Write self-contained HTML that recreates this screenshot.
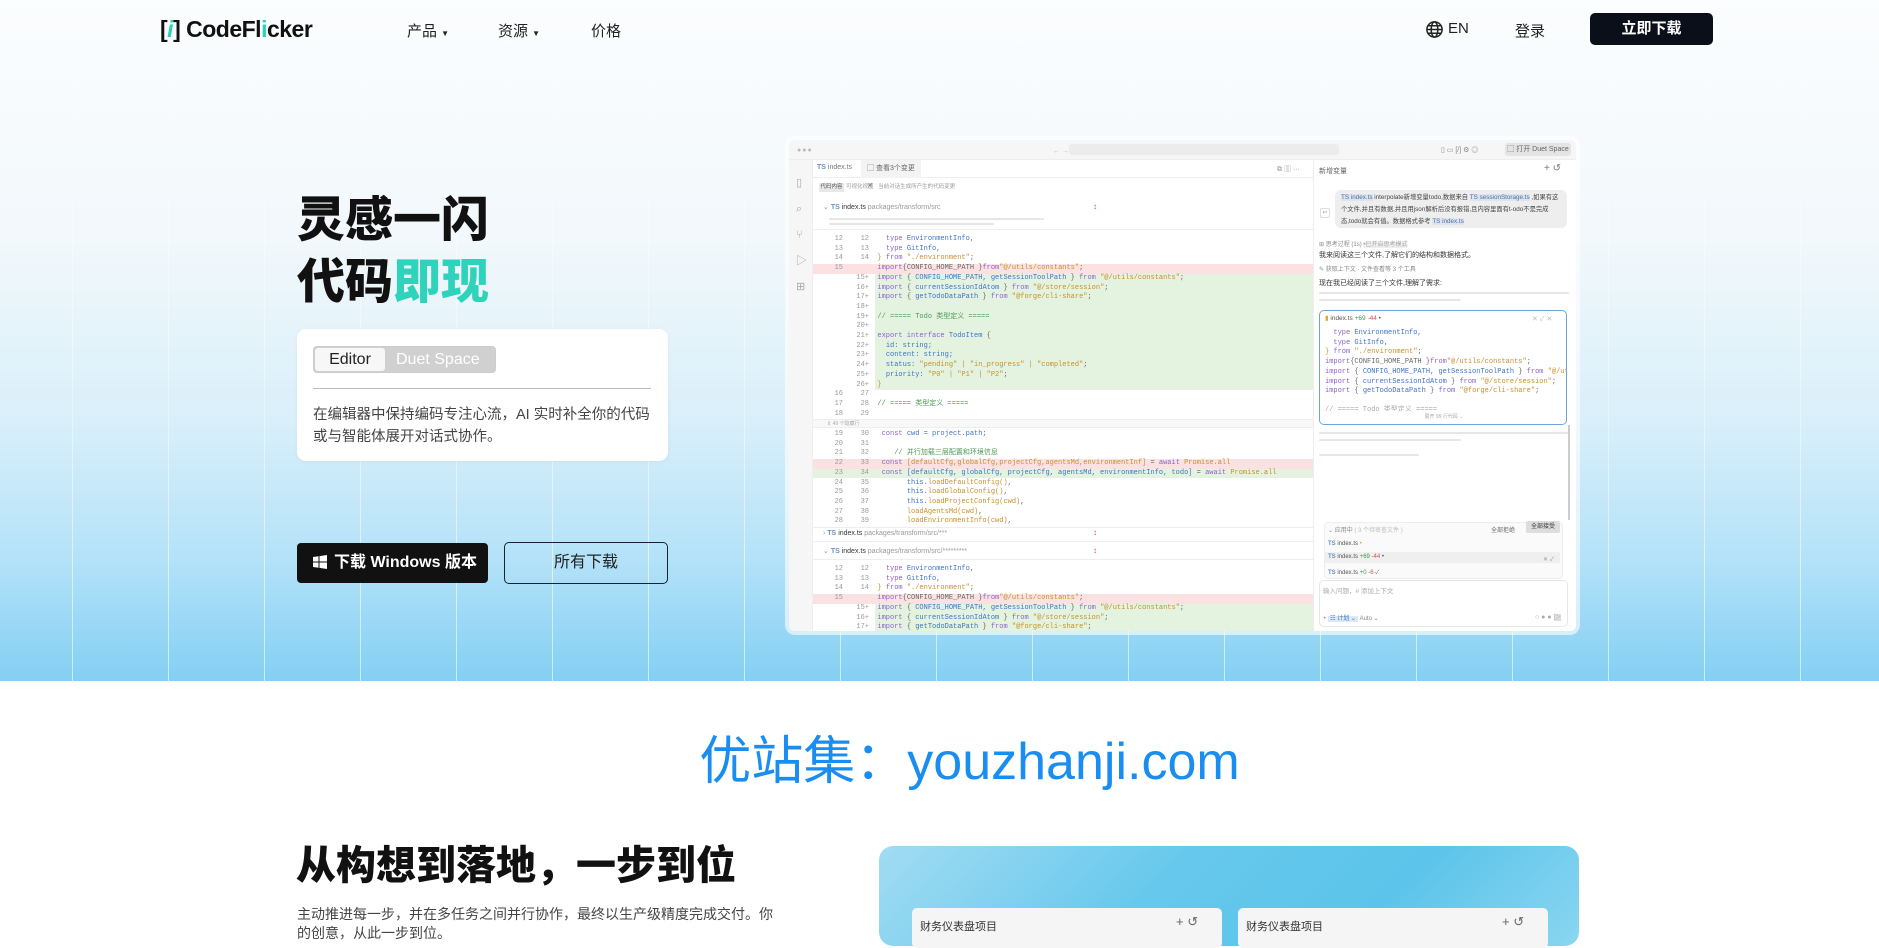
<!DOCTYPE html>
<html><head><meta charset="utf-8">
<style>
*{margin:0;padding:0;box-sizing:border-box}
body{width:1879px;height:933px;overflow:hidden;position:relative;background:#fff;font-family:"Liberation Sans","Noto Sans CJK SC",sans-serif;color:#111}
.abs{position:absolute}
.hero{position:absolute;left:0;top:0;width:1879px;height:681px;background:linear-gradient(180deg,#fbfdfe 0%,#f2f8fb 35%,#d9effa 62%,#b4e2f8 82%,#84cff3 100%);overflow:hidden}
.vl{position:absolute;top:0;width:1px;height:681px;background:linear-gradient(180deg,rgba(255,255,255,0) 0%,rgba(255,255,255,0.35) 40%,rgba(255,255,255,0.6) 100%)}
.nav{font-size:15px;color:#222}
.ed{position:absolute;left:789px;top:140px;width:787px;height:491px;background:#fff;border-radius:6px;box-shadow:0 0 0 4px rgba(255,255,255,0.6);overflow:hidden;font-size:7px;color:#666}
.ln{position:absolute;height:9.7px;line-height:9.7px;white-space:nowrap;font-family:"Liberation Mono","Noto Sans CJK SC",monospace;font-size:7px}
.red{background:#fbe1e1}
.grn{background:#e3f3df}
.k{color:#8a63c9}.s{color:#c7902b}.b{color:#3e73c8}.c{color:#4f9a55}
.bar{position:absolute;height:3px;background:#e6e6e6;border-radius:2px}
</style></head><body>
<div class="hero">
<div class="vl" style="left:72px"></div><div class="vl" style="left:168px"></div><div class="vl" style="left:264px"></div><div class="vl" style="left:360px"></div><div class="vl" style="left:456px"></div><div class="vl" style="left:552px"></div><div class="vl" style="left:648px"></div><div class="vl" style="left:744px"></div><div class="vl" style="left:840px"></div><div class="vl" style="left:936px"></div><div class="vl" style="left:1032px"></div><div class="vl" style="left:1128px"></div><div class="vl" style="left:1224px"></div><div class="vl" style="left:1320px"></div><div class="vl" style="left:1416px"></div><div class="vl" style="left:1512px"></div><div class="vl" style="left:1608px"></div><div class="vl" style="left:1704px"></div><div class="vl" style="left:1800px"></div>
</div>

<!-- nav -->
<div class="abs" style="left:160px;top:16px;font-size:23px;font-weight:700;letter-spacing:-0.5px;color:#111;line-height:26px">[<span style="color:#2ad0b7;font-style:italic">i</span>] CodeFl<span style="color:#2ad0b7">i</span>cker</div>
<div class="abs nav" style="left:407px;top:20px">产品 <span style="font-size:8px">▼</span></div>
<div class="abs nav" style="left:498px;top:20px">资源 <span style="font-size:8px">▼</span></div>
<div class="abs nav" style="left:591px;top:20px">价格</div>
<svg class="abs" style="left:1425px;top:20px" width="19" height="19" viewBox="0 0 20 20" fill="none" stroke="#222" stroke-width="1.6"><circle cx="10" cy="10" r="8"/><ellipse cx="10" cy="10" rx="3.5" ry="8"/><path d="M2 10h16M3.5 6h13M3.5 14h13"/></svg>
<div class="abs nav" style="left:1448px;top:20px">EN</div>
<div class="abs nav" style="left:1515px;top:20px">登录</div>
<div class="abs" style="left:1590px;top:13px;width:123px;height:32px;background:#0b0f1a;border-radius:5px;color:#fff;font-size:15px;font-weight:700;text-align:center;line-height:32px">立即下载</div>

<!-- hero text -->
<div class="abs" style="left:297px;top:190px;font-size:48px;font-weight:900;line-height:62px;color:#111">灵感一闪<br>代码<span style="color:#2fd3bb">即现</span></div>
<div class="abs" style="left:297px;top:329px;width:371px;height:132px;background:#fff;border-radius:9px;box-shadow:0 1px 6px rgba(0,0,0,0.04)"></div>
<div class="abs" style="left:313px;top:346px;width:183px;height:27px;background:#d0d0d0;border-radius:4px;border:1px solid #ccc"></div>
<div class="abs" style="left:315px;top:348px;width:70px;height:23px;background:#f7f7f7;border-radius:3px;font-size:16px;color:#222;text-align:center;line-height:23px">Editor</div>
<div class="abs" style="left:396px;top:348px;font-size:16px;color:#fff;line-height:23px">Duet Space</div>
<div class="abs" style="left:313px;top:388px;width:338px;height:1px;background:#bbb"></div>
<div class="abs" style="left:313px;top:404px;width:345px;font-size:14.5px;color:#444;line-height:22px">在编辑器中保持编码专注心流，AI 实时补全你的代码或与智能体展开对话式协作。</div>

<div class="abs" style="left:297px;top:543px;width:191px;height:40px;background:#111;border-radius:4px;color:#fff;font-size:16px;font-weight:700;line-height:40px;padding-left:16px">
<svg style="vertical-align:-2px;margin-right:7px" width="14" height="14" viewBox="0 0 14 14" fill="#fff"><path d="M0 2l5.5-.8v5.3H0zM6.5 1.1L14 0v6.5H6.5zM0 7.5h5.5v5.3L0 12zM6.5 7.5H14V14l-7.5-1.1z"/></svg>下载 Windows 版本</div>
<div class="abs" style="left:504px;top:542px;width:164px;height:42px;border:1.5px solid #1a2230;border-radius:5px;font-size:16px;color:#222;text-align:center;line-height:39px">所有下载</div>

<!-- editor -->
<div class="ed">
 <div class="abs" style="left:0;top:0;width:787px;height:20px;background:#f6f6f6;border-bottom:1px solid #eee"></div>
 <div class="abs" style="left:8px;top:7px;font-size:7px;color:#bbb;letter-spacing:1px">●●●</div>
 <div class="abs" style="left:264px;top:8px;font-size:7px;color:#bbb">← →</div>
 <div class="abs" style="left:280px;top:4px;width:270px;height:11px;background:#ececec;border-radius:3px"></div>
 <div class="abs" style="left:652px;top:5px;font-size:7px;color:#888">▯ ▭ [/] ⚙ ◎</div>
 <div class="abs" style="left:716px;top:3px;width:66px;height:13px;background:#e4e4e4;border-radius:3px;font-size:7px;color:#666;line-height:13px;text-align:center">▢ 打开 Duet Space</div>
 <div class="abs" style="left:0;top:20px;width:24px;height:471px;background:#f6f6f6;border-right:1px solid #eee"></div>
 <div class="abs" style="left:7px;top:30px;font-size:11px;color:#aaa;line-height:26px">▯<br>⌕<br>⑂<br>▷<br>⊞</div>
 <div class="abs" style="left:24px;top:20px;width:500px;height:18px;border-bottom:1px solid #eee"></div>
 <div class="abs" style="left:28px;top:24px;font-size:7px;color:#6a8fc0"><b>TS</b> <span style="color:#777">index.ts</span></div>
 <div class="abs" style="left:72px;top:20px;width:60px;height:18px;background:#f3f3f3;font-size:7px;color:#666;line-height:18px;padding-left:6px">▢ 查看3个变更 ✕</div>
 <div class="abs" style="left:488px;top:24px;font-size:7px;color:#999">⧉ ▥ ···</div>
 <div class="abs" style="left:30px;top:43px;width:25px;height:9px;background:#e8e8e8;font-size:5.5px;line-height:9px;text-align:center;color:#555">代码内容</div>
 <div class="abs" style="left:57px;top:43px;font-size:5.5px;color:#999;line-height:9px">可视化视图 &nbsp; 当前对话生成所产生的代码变更</div>
 <div class="abs" style="left:34px;top:63px;font-size:7px;color:#999">⌄ <b style="color:#6a8fc0">TS</b> <span style="color:#333">index.ts</span> packages/transform/src</div>
 <div class="abs" style="left:304px;top:62px;font-size:8px;color:#e05050">↕</div>
 <div class="bar" style="left:40px;top:78px;width:215px;height:2px"></div>
 <div class="bar" style="left:40px;top:83px;width:165px;height:2px"></div>
 <div class="abs" style="left:24px;top:89px;width:500px;height:1px;background:#eee"></div>

 <div class="ln" style="top:95px;left:24px;width:500px"><span style="display:inline-block;width:30px;text-align:right;color:#999">12</span><span style="display:inline-block;width:26px;text-align:right;color:#999">12</span> &nbsp; &nbsp;<span class="k">type</span> <span class="b">EnvironmentInfo,</span></div>
 <div class="ln" style="top:104.7px;left:24px;width:500px"><span style="display:inline-block;width:30px;text-align:right;color:#999">13</span><span style="display:inline-block;width:26px;text-align:right;color:#999">13</span> &nbsp; &nbsp;<span class="k">type</span> <span class="b">GitInfo,</span></div>
 <div class="ln" style="top:114.4px;left:24px;width:500px"><span style="display:inline-block;width:30px;text-align:right;color:#999">14</span><span style="display:inline-block;width:26px;text-align:right;color:#999">14</span> &nbsp;<span class="s">}</span> <span class="k">from</span> <span class="s">"./environment"</span>;</div>
 <div class="ln red" style="top:124.1px;left:24px;width:500px"><span style="display:inline-block;width:30px;text-align:right;color:#999">15</span><span style="display:inline-block;width:26px"></span> &nbsp;<span class="k">import</span>{CONFIG_HOME_PATH }<span class="k">from</span><span class="s">"@/utils/constants"</span>;</div>
 <div class="abs grn" style="left:86px;top:133.8px;width:438px;height:116.4px"></div>
 <div class="ln" style="top:133.8px;left:24px"><span style="display:inline-block;width:56px;text-align:right;color:#999">15+</span> &nbsp;<span class="k">import</span> { <span class="b">CONFIG_HOME_PATH, getSessionToolPath</span> } <span class="k">from</span> <span class="s">"@/utils/constants"</span>;</div>
 <div class="ln" style="top:143.5px;left:24px"><span style="display:inline-block;width:56px;text-align:right;color:#999">16+</span> &nbsp;<span class="k">import</span> { <span class="b">currentSessionIdAtom</span> } <span class="k">from</span> <span class="s">"@/store/session"</span>;</div>
 <div class="ln" style="top:153.2px;left:24px"><span style="display:inline-block;width:56px;text-align:right;color:#999">17+</span> &nbsp;<span class="k">import</span> { <span class="b">getTodoDataPath</span> } <span class="k">from</span> <span class="s">"@forge/cli-share"</span>;</div>
 <div class="ln" style="top:162.9px;left:24px"><span style="display:inline-block;width:56px;text-align:right;color:#999">18+</span></div>
 <div class="ln" style="top:172.6px;left:24px"><span style="display:inline-block;width:56px;text-align:right;color:#999">19+</span> &nbsp;<span class="c">// ===== Todo 类型定义 =====</span></div>
 <div class="ln" style="top:182.3px;left:24px"><span style="display:inline-block;width:56px;text-align:right;color:#999">20+</span></div>
 <div class="ln" style="top:192px;left:24px"><span style="display:inline-block;width:56px;text-align:right;color:#999">21+</span> &nbsp;<span class="k">export interface</span> <span class="b">TodoItem</span> {</div>
 <div class="ln" style="top:201.7px;left:24px"><span style="display:inline-block;width:56px;text-align:right;color:#999">22+</span> &nbsp; &nbsp;<span class="b">id: string;</span></div>
 <div class="ln" style="top:211.4px;left:24px"><span style="display:inline-block;width:56px;text-align:right;color:#999">23+</span> &nbsp; &nbsp;<span class="b">content: string;</span></div>
 <div class="ln" style="top:221.1px;left:24px"><span style="display:inline-block;width:56px;text-align:right;color:#999">24+</span> &nbsp; &nbsp;<span class="b">status:</span> <span class="s">"pending" | "in_progress" | "completed"</span>;</div>
 <div class="ln" style="top:230.8px;left:24px"><span style="display:inline-block;width:56px;text-align:right;color:#999">25+</span> &nbsp; &nbsp;<span class="b">priority:</span> <span class="s">"P0" | "P1" | "P2"</span>;</div>
 <div class="ln" style="top:240.5px;left:24px"><span style="display:inline-block;width:56px;text-align:right;color:#999">26+</span> &nbsp;<span class="s">}</span></div>
 <div class="ln" style="top:250.2px;left:24px"><span style="display:inline-block;width:30px;text-align:right;color:#999">16</span><span style="display:inline-block;width:26px;text-align:right;color:#999">27</span></div>
 <div class="ln" style="top:259.9px;left:24px"><span style="display:inline-block;width:30px;text-align:right;color:#999">17</span><span style="display:inline-block;width:26px;text-align:right;color:#999">28</span> &nbsp;<span class="c">// ===== 类型定义 =====</span></div>
 <div class="ln" style="top:269.6px;left:24px"><span style="display:inline-block;width:30px;text-align:right;color:#999">18</span><span style="display:inline-block;width:26px;text-align:right;color:#999">29</span></div>
 <div class="abs" style="left:24px;top:279px;width:500px;height:9px;background:#f8f8f8;border-top:1px solid #eee;border-bottom:1px solid #eee;font-size:5px;color:#aaa;padding-left:14px;line-height:8px">⇕ 49 个隐藏行</div>
 <div class="ln" style="top:290px;left:24px"><span style="display:inline-block;width:30px;text-align:right;color:#999">19</span><span style="display:inline-block;width:26px;text-align:right;color:#999">30</span> &nbsp; <span class="k">const</span> <span class="b">cwd = project.path;</span></div>
 <div class="ln" style="top:299.7px;left:24px"><span style="display:inline-block;width:30px;text-align:right;color:#999">20</span><span style="display:inline-block;width:26px;text-align:right;color:#999">31</span></div>
 <div class="ln" style="top:309.4px;left:24px"><span style="display:inline-block;width:30px;text-align:right;color:#999">21</span><span style="display:inline-block;width:26px;text-align:right;color:#999">32</span> &nbsp; &nbsp; &nbsp;<span class="c">// 并行加载三层配置和环境信息</span></div>
 <div class="ln red" style="top:319.1px;left:24px;width:500px"><span style="display:inline-block;width:30px;text-align:right;color:#999">22</span><span style="display:inline-block;width:26px;text-align:right;color:#999">33</span> &nbsp; <span class="k">const</span> <span class="s">[defaultCfg,globalCfg,projectCfg,agentsMd,environmentInf]</span> = <span class="k">await</span> <span class="s">Promise.all</span></div>
 <div class="ln grn" style="top:328.8px;left:24px;width:500px"><span style="display:inline-block;width:30px;text-align:right;color:#999">23</span><span style="display:inline-block;width:26px;text-align:right;color:#999">34</span> &nbsp; <span class="k">const</span> <span class="b">[defaultCfg, globalCfg, projectCfg, agentsMd, environmentInfo, todo]</span> = <span class="k">await</span> <span class="s">Promise.all</span></div>
 <div class="ln" style="top:338.5px;left:24px"><span style="display:inline-block;width:30px;text-align:right;color:#999">24</span><span style="display:inline-block;width:26px;text-align:right;color:#999">35</span> &nbsp; &nbsp; &nbsp; &nbsp; <span class="b">this.</span><span class="s">loadDefaultConfig()</span>,</div>
 <div class="ln" style="top:348.2px;left:24px"><span style="display:inline-block;width:30px;text-align:right;color:#999">25</span><span style="display:inline-block;width:26px;text-align:right;color:#999">36</span> &nbsp; &nbsp; &nbsp; &nbsp; <span class="b">this.</span><span class="s">loadGlobalConfig()</span>,</div>
 <div class="ln" style="top:357.9px;left:24px"><span style="display:inline-block;width:30px;text-align:right;color:#999">26</span><span style="display:inline-block;width:26px;text-align:right;color:#999">37</span> &nbsp; &nbsp; &nbsp; &nbsp; <span class="b">this.</span><span class="s">loadProjectConfig(cwd)</span>,</div>
 <div class="ln" style="top:367.6px;left:24px"><span style="display:inline-block;width:30px;text-align:right;color:#999">27</span><span style="display:inline-block;width:26px;text-align:right;color:#999">38</span> &nbsp; &nbsp; &nbsp; &nbsp; <span class="s">loadAgentsMd(cwd)</span>,</div>
 <div class="ln" style="top:377.3px;left:24px"><span style="display:inline-block;width:30px;text-align:right;color:#999">28</span><span style="display:inline-block;width:26px;text-align:right;color:#999">39</span> &nbsp; &nbsp; &nbsp; &nbsp; <span class="s">loadEnvironmentInfo(cwd)</span>,</div>
 <div class="abs" style="left:24px;top:387px;width:500px;height:1px;background:#eee"></div>
 <div class="abs" style="left:34px;top:387px;font-size:7px;color:#999;line-height:14px">› <b style="color:#6a8fc0">TS</b> <span style="color:#333">index.ts</span> packages/transform/src/***</div>
 <div class="abs" style="left:304px;top:388px;font-size:8px;color:#e05050">↕</div>
 <div class="abs" style="left:24px;top:401px;width:500px;height:1px;background:#eee"></div>
 <div class="abs" style="left:34px;top:405px;font-size:7px;color:#999;line-height:14px">⌄ <b style="color:#6a8fc0">TS</b> <span style="color:#333">index.ts</span> packages/transform/src/*********</div>
 <div class="abs" style="left:304px;top:406px;font-size:8px;color:#e05050">↕</div>
 <div class="abs" style="left:24px;top:419px;width:500px;height:1px;background:#eee"></div>
 <div class="ln" style="top:425px;left:24px"><span style="display:inline-block;width:30px;text-align:right;color:#999">12</span><span style="display:inline-block;width:26px;text-align:right;color:#999">12</span> &nbsp; &nbsp;<span class="k">type</span> <span class="b">EnvironmentInfo,</span></div>
 <div class="ln" style="top:434.7px;left:24px"><span style="display:inline-block;width:30px;text-align:right;color:#999">13</span><span style="display:inline-block;width:26px;text-align:right;color:#999">13</span> &nbsp; &nbsp;<span class="k">type</span> <span class="b">GitInfo,</span></div>
 <div class="ln" style="top:444.4px;left:24px"><span style="display:inline-block;width:30px;text-align:right;color:#999">14</span><span style="display:inline-block;width:26px;text-align:right;color:#999">14</span> &nbsp;<span class="s">}</span> <span class="k">from</span> <span class="s">"./environment"</span>;</div>
 <div class="ln red" style="top:454.1px;left:24px;width:500px"><span style="display:inline-block;width:30px;text-align:right;color:#999">15</span><span style="display:inline-block;width:26px"></span> &nbsp;<span class="k">import</span>{CONFIG_HOME_PATH }<span class="k">from</span><span class="s">"@/utils/constants"</span>;</div>
 <div class="abs grn" style="left:86px;top:463.8px;width:438px;height:30px"></div>
 <div class="ln" style="top:463.8px;left:24px"><span style="display:inline-block;width:56px;text-align:right;color:#999">15+</span> &nbsp;<span class="k">import</span> { <span class="b">CONFIG_HOME_PATH, getSessionToolPath</span> } <span class="k">from</span> <span class="s">"@/utils/constants"</span>;</div>
 <div class="ln" style="top:473.5px;left:24px"><span style="display:inline-block;width:56px;text-align:right;color:#999">16+</span> &nbsp;<span class="k">import</span> { <span class="b">currentSessionIdAtom</span> } <span class="k">from</span> <span class="s">"@/store/session"</span>;</div>
 <div class="ln" style="top:483.2px;left:24px"><span style="display:inline-block;width:56px;text-align:right;color:#999">17+</span> &nbsp;<span class="k">import</span> { <span class="b">getTodoDataPath</span> } <span class="k">from</span> <span class="s">"@forge/cli-share"</span>;</div>

 <!-- chat panel -->
 <div class="abs" style="left:524px;top:20px;width:263px;height:471px;background:#fff;border-left:1px solid #eee"></div>
 <div class="abs" style="left:530px;top:26px;font-size:7px;color:#666">新增变量</div>
 <div class="abs" style="left:755px;top:23px;font-size:10px;color:#777">+ ↺</div>
 <div class="abs" style="left:546px;top:50px;width:232px;height:38px;background:#eeeeee;border-radius:6px;font-size:6.3px;color:#444;line-height:12px;padding:2px 6px">
 <span style="background:#dde4ee;color:#4870a8">TS index.ts</span> interpolate新增变量todo,数据来自 <span style="background:#dde4ee;color:#4870a8">TS sessionStorage.ts</span> ,如果有这个文件,并且有数据,并且用json解析后没有报错,且内容里面有t-odo不是完成态,todo就会有值。数据格式参考 <span style="background:#dde4ee;color:#4870a8">TS index.ts</span></div>
 <div class="abs" style="left:531px;top:68px;width:10px;height:10px;border:1px solid #ddd;border-radius:2px;font-size:6px;color:#999;text-align:center">↩</div>
 <div class="abs" style="left:530px;top:99px;font-size:6px;color:#888">⊞ 思考过程 (1s) <span style="background:#eee;color:#aaa">•已开启思考模式</span></div>
 <div class="abs" style="left:530px;top:110px;font-size:7px;color:#333">我来阅读这三个文件,了解它们的结构和数据格式。</div>
 <div class="abs" style="left:530px;top:124px;font-size:6px;color:#888">✎ 获取上下文 · 文件查看等 3 个工具</div>
 <div class="abs" style="left:530px;top:138px;font-size:7px;color:#333">现在我已经阅读了三个文件,理解了需求:</div>
 <div class="bar" style="left:530px;top:152px;width:250px;height:2px"></div>
 <div class="bar" style="left:530px;top:159px;width:142px;height:2px"></div>
 <div class="abs" style="left:530px;top:170px;width:248px;height:115px;border:1.5px solid #6ea3e0;border-radius:5px;background:#fff;overflow:hidden">
  <div class="abs" style="left:5px;top:3px;font-size:6.5px;color:#555"><span style="color:#e8a030">▮</span> index.ts <span style="color:#3a9a50">+69</span> <span style="color:#d05050">-44</span> •</div>
  <div class="abs" style="left:212px;top:3px;font-size:7px;color:#bbb">✕ ✓ ✕</div>
  <div class="ln" style="top:18px;left:5px">&nbsp; <span class="k">type</span> <span class="b">EnvironmentInfo,</span></div>
  <div class="ln" style="top:27.7px;left:5px">&nbsp; <span class="k">type</span> <span class="b">GitInfo,</span></div>
  <div class="ln" style="top:37.4px;left:5px"><span class="s">}</span> <span class="k">from</span> <span class="s">"./environment"</span>;</div>
  <div class="ln" style="top:47.1px;left:5px"><span class="k">import</span>{CONFIG_HOME_PATH }<span class="k">from</span><span class="s">"@/utils/constants"</span>;</div>
  <div class="ln" style="top:56.8px;left:5px"><span class="k">import</span> { <span class="b">CONFIG_HOME_PATH, getSessionToolPath</span> } <span class="k">from</span> <span class="s">"@/utils/constants"</span></div>
  <div class="ln" style="top:66.5px;left:5px"><span class="k">import</span> { <span class="b">currentSessionIdAtom</span> } <span class="k">from</span> <span class="s">"@/store/session"</span>;</div>
  <div class="ln" style="top:76.2px;left:5px"><span class="k">import</span> { <span class="b">getTodoDataPath</span> } <span class="k">from</span> <span class="s">"@forge/cli-share"</span>;</div>
  <div class="ln" style="top:95px;left:5px;color:#aaa">// ===== Todo 类型定义 =====</div>
  <div class="abs" style="left:0;top:100px;width:248px;height:14px;background:rgba(255,255,255,0.9);font-size:5px;color:#aaa;text-align:center;line-height:12px">展开 99 行代码 ⌄</div>
 </div>
 <div class="bar" style="left:530px;top:292px;width:250px;height:2px"></div>
 <div class="bar" style="left:530px;top:299px;width:142px;height:2px"></div>
 <div class="bar" style="left:530px;top:314px;width:100px;height:2px"></div>
 <div class="abs" style="left:779px;top:285px;width:2px;height:95px;background:#ccc"></div>
 <div class="abs" style="left:535px;top:382px;width:239px;height:57px;background:#fafafa;border:1px solid #eee;border-radius:4px"></div>
 <div class="abs" style="left:539px;top:385px;font-size:6px;color:#888">⌄ 应用中 <span style="color:#bbb">( 3 个待审查文件 )</span></div>
 <div class="abs" style="left:702px;top:385px;font-size:6px;color:#666">全部拒绝</div>
 <div class="abs" style="left:737px;top:381px;width:34px;height:12px;background:#ddd;border-radius:2px;font-size:6px;color:#333;line-height:12px;text-align:center">全部接受</div>
 <div class="abs" style="left:539px;top:401px;font-size:6px;color:#555"><b style="color:#6a8fc0">TS</b> index.ts <span style="color:#e8a030">•</span></div>
 <div class="abs" style="left:536px;top:412px;width:235px;height:11px;background:#efefef"></div>
 <div class="abs" style="left:539px;top:414px;font-size:6px;color:#555"><b style="color:#6a8fc0">TS</b> index.ts <span style="color:#3a9a50">+69</span> <span style="color:#d05050">-44</span> •</div>
 <div class="abs" style="left:754px;top:414px;font-size:6px;color:#999">✕ ✓</div>
 <div class="abs" style="left:539px;top:427px;font-size:6px;color:#555"><b style="color:#6a8fc0">TS</b> index.ts <span style="color:#3a9a50">+0</span> <span style="color:#d05050">-6</span> <span style="color:#3a9a50">✓</span></div>
 <div class="abs" style="left:530px;top:440px;width:249px;height:47px;background:#fff;border:1px solid #e6e6e6;border-radius:5px"></div>
 <div class="abs" style="left:534px;top:445px;font-size:6.5px;color:#aaa">输入问题，# 添加上下文</div>
 <div class="abs" style="left:534px;top:473px;font-size:6px;color:#888">+ <span style="background:#dbe8f8;color:#4070c0;padding:0 2px">☷ 计划 ⌄</span> Auto ⌄</div>
 <div class="abs" style="left:746px;top:472px;font-size:7px;color:#aaa">○ ● ● <span style="background:#ddd">▷</span></div>
</div>

<!-- watermark -->
<div class="abs" style="left:0;top:734px;width:1939px;text-align:center;font-size:52px;color:#1a8ef0;line-height:56px">优站集：youzhanji.com</div>

<!-- section 2 -->
<div class="abs" style="left:296px;top:843px;font-size:40px;font-weight:900;color:#111;line-height:46px">从构想到落地，一步到位</div>
<div class="abs" style="left:297px;top:905px;width:480px;font-size:14px;color:#444;line-height:19px">主动推进每一步，并在多任务之间并行协作，最终以生产级精度完成交付。你的创意，从此一步到位。</div>
<div class="abs" style="left:879px;top:846px;width:700px;height:100px;border-radius:14px;background:linear-gradient(135deg,#a2dcf2 0%,#66c8ec 40%,#5cc4ea 70%,#8ad6f0 100%)"></div>
<div class="abs" style="left:912px;top:908px;width:310px;height:40px;background:#f5f5f5;border-radius:5px"></div>
<div class="abs" style="left:920px;top:918px;font-size:11px;color:#333">财务仪表盘项目</div>
<div class="abs" style="left:1176px;top:914px;font-size:13px;color:#666">+ ↺</div>
<div class="abs" style="left:1238px;top:908px;width:310px;height:40px;background:#f5f5f5;border-radius:5px"></div>
<div class="abs" style="left:1246px;top:918px;font-size:11px;color:#333">财务仪表盘项目</div>
<div class="abs" style="left:1502px;top:914px;font-size:13px;color:#666">+ ↺</div>
</body></html>
